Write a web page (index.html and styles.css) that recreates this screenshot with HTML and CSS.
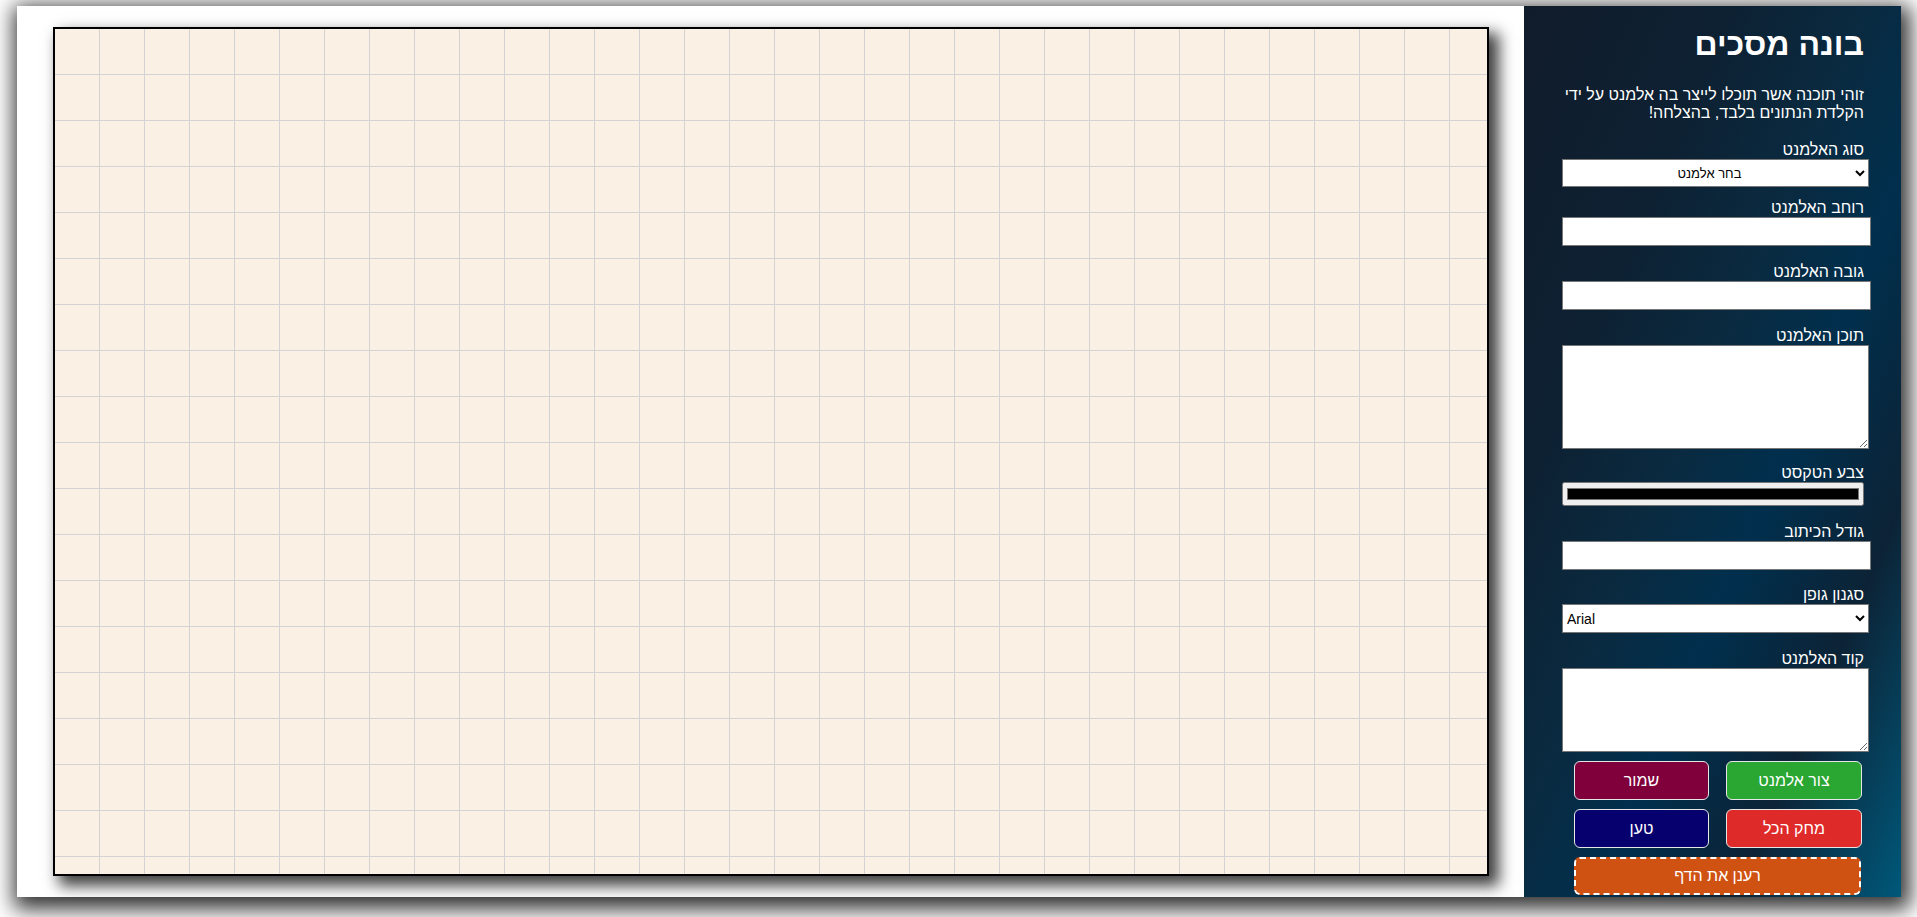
FILE: index.html
```html
<!DOCTYPE html>
<html lang="he">
<head>
<meta charset="utf-8">
<title>בונה מסכים</title>
<link rel="stylesheet" href="styles.css">
</head>
<body>
<div class="app">
  <div class="canvas"></div>
  <aside class="panel" dir="rtl">
    <h1 class="title">בונה מסכים</h1>
    <p class="intro">זוהי תוכנה אשר תוכלו לייצר בה אלמנט על ידי הקלדת הנתונים בלבד, בהצלחה!</p>
    <form class="form">
      <label class="label label-first" for="type">סוג האלמנט</label>
      <select id="type" class="select select-center">
        <option>בחר אלמנט</option>
      </select>
      <label class="label label-after-select" for="w">רוחב האלמנט</label>
      <input id="w" class="input" type="text">
      <label class="label" for="h">גובה האלמנט</label>
      <input id="h" class="input" type="text">
      <label class="label" for="content">תוכן האלמנט</label>
      <textarea id="content" class="area area-tall"></textarea>
      <label class="label label-after-area" for="color">צבע הטקסט</label>
      <input id="color" class="color" type="color" value="#000000">
      <label class="label label-after-color" for="size">גודל הכיתוב</label>
      <input id="size" class="input" type="text">
      <label class="label label-after-input2" for="font">סגנון גופן</label>
      <select id="font" class="select select-left">
        <option>Arial</option>
      </select>
      <label class="label" for="code">קוד האלמנט</label>
      <textarea id="code" class="area area-short"></textarea>
      <div class="actions">
        <button type="button" class="btn btn-green">צור אלמנט</button>
        <button type="button" class="btn btn-maroon">שמור</button>
        <button type="button" class="btn btn-red">מחק הכל</button>
        <button type="button" class="btn btn-navy">טען</button>
        <button type="button" class="btn btn-refresh">רענן את הדף</button>
      </div>
    </form>
  </aside>
</div>
</body>
</html>
```

FILE: styles.css
```css
html, body {
  margin: 0;
  padding: 0;
}
body {
  background: #ffffff;
  width: 1917px;
  height: 917px;
  overflow: hidden;
  font-family: "Liberation Sans", Arial, "DejaVu Sans", sans-serif;
}
.app {
  display: flex;
  width: 1884px;
  height: 891px;
  margin: 6px 0 0 17px;
  background: #ffffff;
  box-shadow: 3px 6px 20px 6px rgba(0, 0, 0, 0.8);
}
.canvas {
  flex: none;
  box-sizing: border-box;
  width: 1436px;
  height: 849px;
  margin: 21px 35px 0 36px;
  border: 2px solid #000;
  background-color: #faf0e4;
  background-image:
    linear-gradient(to right, transparent 44px, #d3d3d3 44px),
    linear-gradient(to bottom, transparent 45px, #d3d3d3 45px);
  background-size: 45px 46px;
  box-shadow: 8px 8px 14px 2px rgba(0, 0, 0, 0.75);
}
.panel {
  flex: none;
  box-sizing: border-box;
  width: 377px;
  height: 891px;
  padding: 0 30px 0 38px;
  color: #fff;
  background: linear-gradient(to bottom right, #111c2b 0%, #0d2133 28%, #0a2a40 45%, #002f4d 60%, #0c2336 78%, #00587a 100%);
}
.title {
  margin: 20px 7px 0 0;
  font-size: 32px;
  line-height: 37px;
  font-weight: bold;
}
.intro {
  margin: 23px 7px 0 0;
  font-size: 16px;
  line-height: 18px;
}
.form {
  display: flex;
  flex-direction: column;
  align-items: flex-start;
}
.label {
  display: block;
  margin: 16px 7px -1px 0;
  font-size: 16px;
  line-height: 20px;
}
.label-first { margin-top: 18px; }
.label-after-select { margin-top: 11px; }
.label-after-area { margin-top: 14px; }
.label-after-color { margin-top: 16px; }
.label-after-input2 { margin-top: 15px; }
.input {
  box-sizing: border-box;
  width: 309px;
  height: 29px;
  margin: 0;
  border: 1px solid #767676;
  background: #fff;
  border-radius: 0;
  font-family: inherit;
}
.select {
  box-sizing: border-box;
  width: 307px;
  height: 28px;
  margin: 0 2px 0 0;
  border: 1px solid #767676;
  border-radius: 0;
  background-color: #fff;
  color: #000;
  direction: ltr;
  font-family: "Liberation Sans", Arial, sans-serif;
}
.select-center {
  font-size: 13px;
  text-align: center;
  text-align-last: center;
}
.select-left {
  height: 29px;
  font-size: 14px;
}
.area {
  box-sizing: border-box;
  width: 307px;
  margin: 0 2px 0 0;
  border: 1px solid #767676;
  border-radius: 0;
  background: #fff;
  font-family: inherit;
  direction: ltr;
}
.area-tall { height: 104px; }
.area-short { height: 84px; }
.color {
  box-sizing: border-box;
  width: 302px;
  height: 24px;
  margin: 0 7px 0 0;
}
.actions {
  display: grid;
  grid-template-columns: 136px 135px;
  column-gap: 17px;
  row-gap: 9px;
  margin: 9px 9px 0 0;
}
.btn {
  height: 39px;
  border: 1px solid #e6e6e6;
  border-radius: 6px;
  color: #fff;
  font-family: inherit;
  font-size: 16px;
  padding: 0;
  cursor: pointer;
}
.btn-green { background: #2aa632; }
.btn-maroon { background: #80003c; }
.btn-red { background: #df2a2a; }
.btn-navy { background: #05006e; }
.btn-refresh {
  grid-column: 1 / span 2;
  justify-self: end;
  width: 287px;
  height: 38px;
  border: 2px dashed #fff;
  background: #d05212;
}
```
